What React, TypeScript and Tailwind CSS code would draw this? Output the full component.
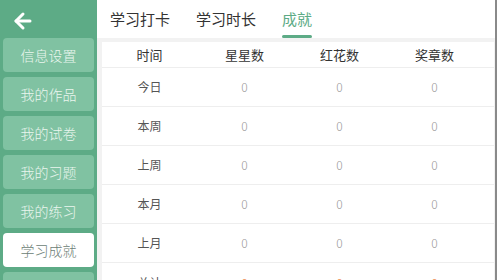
import React from 'react';
import { ArrowLeft } from 'lucide-react';

const menu = ['信息设置', '我的作品', '我的试卷', '我的习题', '我的练习', '学习成就', '其他'];
const tabs = ['学习打卡', '学习时长', '成就'];
const rows = ['今日', '本周', '上周', '本月', '上月'];

const App: React.FC = () => {
  return (
    <div
      className="flex h-[280px] w-[497px] overflow-hidden bg-[#f2f2f2] border-r-2 border-[#8a8a8a]"
      style={{ fontFamily: '"Noto Sans CJK SC", "Noto Sans", sans-serif' }}
    >
      {/* sidebar */}
      <div className="flex w-[97px] shrink-0 flex-col bg-[#5dab86]">
        <div className="flex h-[38px] shrink-0 items-center pl-[11px] pt-[4px]">
          <ArrowLeft className="h-[24px] w-[24px] text-white" strokeWidth={3} />
        </div>
        <div className="flex flex-col gap-[5px] px-[3px]">
          {menu.map((m) => {
            const active = m === '学习成就';
            return (
              <div
                key={m}
                className={
                  active
                    ? 'flex h-[34px] shrink-0 items-center justify-center rounded-[4px] bg-white text-[14px] font-light text-[#6b7d74]'
                    : 'flex h-[34px] shrink-0 items-center justify-center rounded-[4px] bg-[#80c2a2] text-[14px] font-light text-[#eaf6ef]'
                }
              >
                {m}
              </div>
            );
          })}
        </div>
      </div>

      {/* main */}
      <div className="flex flex-1 flex-col">
        <div className="flex h-[38px] shrink-0 items-end gap-[26px] bg-white pl-[13px]">
          {tabs.map((t) => {
            const active = t === '成就';
            return (
              <div
                key={t}
                className={
                  active
                    ? 'flex h-full flex-col justify-between pt-[8px] text-[15px] text-[#5dab86]'
                    : 'flex h-full flex-col justify-between pt-[8px] text-[15px] text-[#333]'
                }
              >
                <span className="leading-[22px]">{t}</span>
                <span className={active ? 'h-[3px] w-full rounded-full bg-[#5dab86]' : 'h-[3px]'} />
              </div>
            );
          })}
        </div>

        <div className="ml-[5px] mr-[1px] mt-[4px] flex-1 bg-white">
          <div className="grid h-[26px] grid-cols-[95px_95px_95px_95px] items-center border-b border-[#eeeeee] text-center text-[13px] text-[#333]">
            <span>时间</span>
            <span>星星数</span>
            <span>红花数</span>
            <span>奖章数</span>
          </div>
          {rows.map((r) => (
            <div
              key={r}
              className="grid h-[39px] grid-cols-[95px_95px_95px_95px] items-center border-b border-[#eeeeee] text-center text-[12px]"
            >
              <span className="text-[#555]">{r}</span>
              <span className="font-light text-[#999]">0</span>
              <span className="font-light text-[#999]">0</span>
              <span className="font-light text-[#999]">0</span>
            </div>
          ))}
          <div className="grid h-[39px] grid-cols-[95px_95px_95px_95px] items-center text-center text-[12px]">
            <span className="text-[#555]">总计</span>
            <span className="text-[#f0a070]">0</span>
            <span className="text-[#f0a070]">0</span>
            <span className="text-[#f0a070]">0</span>
          </div>
        </div>
      </div>
    </div>
  );
};

export default App;
